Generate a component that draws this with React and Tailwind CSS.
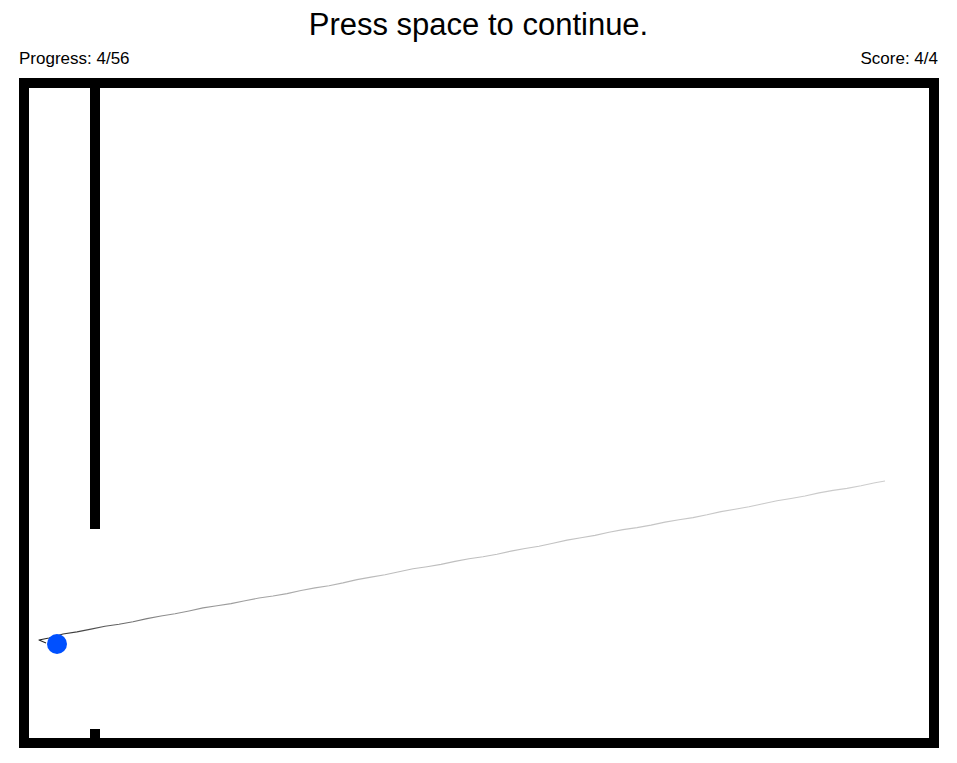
import React from 'react';

// trail of the pointer, in field coordinates (field is 900x650)
const anchors = [
    [34, 546],
    [111, 532],
    [221, 512],
    [856, 393],
];

function yAt(x) {
    for (let i = 0; i < anchors.length - 1; i++) {
        const [x0, y0] = anchors[i];
        const [x1, y1] = anchors[i + 1];
        if (x <= x1) return y0 + ((x - x0) / (x1 - x0)) * (y1 - y0);
    }
    return anchors[anchors.length - 1][1];
}

function buildTrail() {
    const pts = [[17, 555], [10, 552], [20, 550]];
    let k = 0;
    for (let x = 34; x < 856; x += 14) {
        const wobble = Math.sin(k * 1.7) * 0.35 + Math.sin(k * 0.45) * 0.3;
        pts.push([x, yAt(x) + wobble]);
        k++;
    }
    pts.push([856, 393]);
    return pts.map(([x, y], i) => `${i ? 'L' : 'M'}${x.toFixed(1)} ${y.toFixed(1)}`).join(' ');
}

const trail = buildTrail();

function Field() {
    return (
        <svg viewBox="0 0 900 650" className="block w-full h-full">
            <defs>
                <linearGradient id="trail" gradientUnits="userSpaceOnUse" x1="10" y1="0" x2="856" y2="0">
                    <stop offset="0" stopColor="#222222" />
                    <stop offset="0.15" stopColor="#8f8f8f" />
                    <stop offset="0.4" stopColor="#bcbcbc" />
                    <stop offset="1" stopColor="#cdcdcd" />
                </linearGradient>
            </defs>
            <rect x="61" y="0" width="10" height="441" fill="#000" />
            <rect x="61" y="641" width="10" height="9" fill="#000" />
            <path d={trail} fill="none" stroke="url(#trail)" strokeWidth="1.1" strokeLinejoin="round" />
            <circle cx="28" cy="556" r="10" fill="#0050ff" />
        </svg>
    );
}

export default function App() {
    return (
        <div className="w-[957px] h-[763px] bg-white text-black px-[19px] font-['Liberation_Sans',Arial,sans-serif] overflow-hidden">
            <div className="pt-[5px] h-[45px] text-center text-[31px] leading-[40px]">
                Press space to continue.
            </div>
            <div className="mt-[4px] flex justify-between text-[17px] leading-[20px]">
                <span>Progress: 4/56</span>
                <span>Score: 4/4</span>
            </div>
            <div className="mt-[9px] w-[920px] h-[670px] border-[10px] border-black">
                <Field />
            </div>
        </div>
    );
}
